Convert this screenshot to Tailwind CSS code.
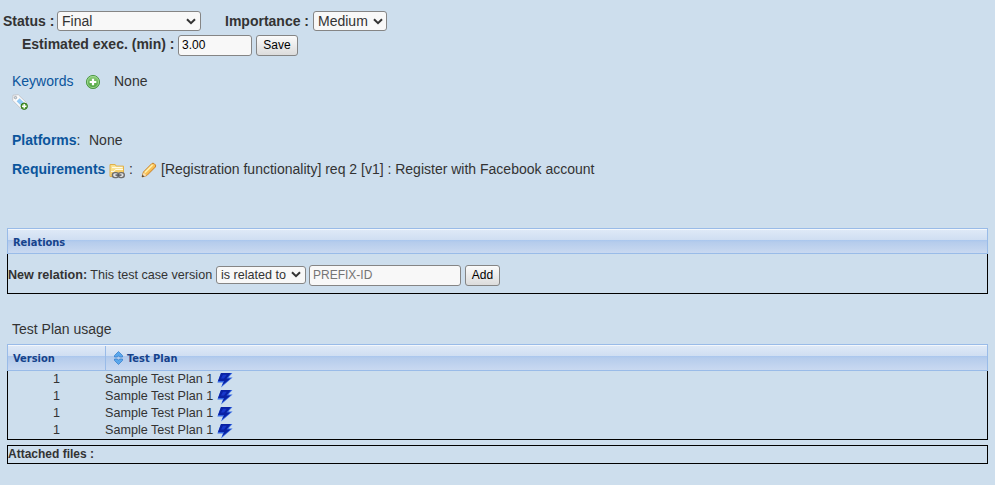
<!DOCTYPE html>
<html lang="en">
<head>
<meta charset="utf-8">
<title>Test Case</title>
<script src="https://cdn.jsdelivr.net/npm/@tailwindcss/browser@4"></script>
</head>
<body class="h-[485px] w-[995px] overflow-hidden bg-[#cddeed] font-['Liberation_Sans',Arial,sans-serif] text-[14px] leading-[18px] whitespace-nowrap text-[#333]">
<svg class="absolute size-0">
  <defs>
    <linearGradient id="green" x1="0" y1="0" x2="0" y2="1"><stop offset="0" stop-color="#8fce7c"/><stop offset="1" stop-color="#48a03c"/></linearGradient>
    <linearGradient id="pencil" x1="0" y1="0" x2="1" y2="1"><stop offset="0" stop-color="#fff0a0"/><stop offset=".5" stop-color="#fbc45a"/><stop offset="1" stop-color="#e08a20"/></linearGradient>
    <symbol id="chevron" viewBox="0 0 10 7"><path d="M1 1.2 5 5.2 9 1.2" fill="none" stroke="#333" stroke-width="2"/></symbol>
    <symbol id="bolt" viewBox="0 0 16 16"><path d="M4 1H15.4L11.4 5.6H15.6L4 15.4 6 10.4H.4Z" fill="#3468e4"/><path d="M4 1H14L9.5 6.4H13.6L5 13.4 7.2 9H1Z" fill="#0a22a4"/><path d="M6 2.8H9.8L7 6.6H4Z" fill="#1838cc"/></symbol>
  </defs>
</svg>

<main class="flex flex-col">
  <div class="flex h-[22px] items-center pl-[3px] mt-[10px]">
    <label class="w-[54px] font-bold">Status :</label>
    <div class="grid h-5 w-36 items-center">
      <select class="col-start-1 row-start-1 h-5 w-36 appearance-none rounded-[3px] border border-[#858585] bg-[#f8f8f8] pl-1 text-[14px] leading-[18px]"><option>Final</option></select>
      <svg class="pointer-events-none col-start-1 row-start-1 mr-[5px] h-[7px] w-[10px] justify-self-end"><use href="#chevron"/></svg>
    </div>
    <label class="ml-6 w-[88px] font-bold">Importance :</label>
    <div class="grid h-5 w-[74px] items-center">
      <select class="col-start-1 row-start-1 h-5 w-[74px] appearance-none rounded-[3px] border border-[#858585] bg-[#f8f8f8] pl-1 text-[14px] leading-[18px]"><option>Medium</option></select>
      <svg class="pointer-events-none col-start-1 row-start-1 mr-[4px] h-[7px] w-[10px] justify-self-end"><use href="#chevron"/></svg>
    </div>
  </div>
  <div class="mt-[2px] flex h-[22px] items-center pl-[22px]">
    <label class="w-[156px] pb-[2px] font-bold">Estimated exec. (min) :</label>
    <input value="3.00" class="h-[21px] w-[74px] rounded-[3px] border border-[#858585] bg-[#f8f8f8] px-[3px] text-[12px] text-black">
    <button class="ml-1 h-[21px] w-[42px] rounded-[3px] border border-[#858585] bg-linear-to-b from-[#fbfbfb] to-[#dcdcdc] text-[12px] leading-[18px] text-black">Save</button>
  </div>

  <div class="mt-[15px] flex h-5 items-center pl-3">
    <a class="w-[73px] text-[#0b559c]">Keywords</a>
    <svg class="mt-[2px] size-4" viewBox="0 0 16 16"><circle cx="8" cy="8" r="6.6" fill="url(#green)" stroke="#4f9a48"/><circle cx="8" cy="8" r="5.6" fill="none" stroke="#a6dc98" stroke-width=".8"/><path d="M8 4.7v6.6M4.7 8h6.6" stroke="#fff" stroke-width="2.2"/></svg>
    <span class="ml-[13px]">None</span>
  </div>
  <div class="mt-[3px] pl-3">
    <svg class="size-4" viewBox="0 0 16 16"><path d="M1 1.2 6.3.7 14.6 8.8 8.8 14.6.7 6.4Z" fill="#fbfbfc" stroke="#c3c5ca"/><path d="M4.6 7.2 7.6 4.2 12 8.4 8.8 11.4Z" fill="#92caf6"/><circle cx="3.5" cy="3.6" r="1.2" fill="#cddeed" stroke="#999" stroke-width=".8"/><circle cx="12.2" cy="12.2" r="3.2" fill="#5ba538" stroke="#35751f"/><path d="M12.2 10v4.4M10 12.2h4.4" stroke="#fff" stroke-width="1.4"/></svg>
  </div>
  <div class="mt-[21px] flex h-[18px] items-center pl-3">
    <span class="w-[77px]"><b class="text-[#0b559c]">Platforms</b>:</span><span>None</span>
  </div>
  <div class="mt-[11px] flex h-[18px] items-center pl-3">
    <b class="w-[97px] text-[#0b559c]">Requirements</b>
    <svg class="mt-[3px] size-4" viewBox="0 0 16 16"><path d="M1 13.5V1.5h5.2l1 1.6h7.3v10.4Z" fill="#f9e08c" stroke="#dfb04c"/><path d="M3 4.5h10.5" stroke="#fffbe4" stroke-width="1.2"/><path d="M2 13V9h3l1.5-2H14v6Z" fill="#f6d06a"/><path d="M2 8.5h3l1.5-2H14" fill="none" stroke="#fffbe4"/><g fill="#e2e3e4" stroke="#6d6d6d" stroke-width="1.4"><rect x="3.4" y="9.6" width="6.2" height="5" rx="2.5"/><rect x="9.3" y="9.6" width="6" height="5" rx="2.5"/></g><path d="M6.5 12.1h6" stroke="#555" stroke-width="1.4"/></svg>
    <span class="ml-1 w-3">:</span>
    <svg class="mt-[2px] size-4" viewBox="0 0 16 16"><path d="M1 15 2.4 10 10.8 1.6Q12 .6 13.3 1.8L14.3 2.8Q15.3 4 14.2 5.2L5.9 13.5Z" fill="url(#pencil)" stroke="#c47b21" stroke-width=".9"/><path d="M4 10.5 11.5 3" stroke="#fff3b1" stroke-width="1.5"/><path d="m1.4 14.6 1.2-4 2.9 2.9Z" fill="#f5dfba"/><path d="m1 15 .6-2.2 1.6 1.6Z" fill="#333"/></svg>
    <span class="ml-1">[Registration functionality] req 2 [v1] : Register with Facebook account</span>
  </div>

  <section class="mt-[50px] ml-[7px] w-[981px] text-[12.6px]">
    <h2 class="h-[26px] border border-[#99bbe8] text-[11px] font-bold text-[#15428b]">
      <span class="flex h-[24px] items-center border-t border-[#f3f7fc] bg-[linear-gradient(to_bottom,#dee9f7_0,#cfdef2_10px,#a8c6ee_10px,#b5ccec_12px,#cbdaf1_24px)] pl-[5px] pt-[2px] font-['DejaVu_Sans_Condensed','DejaVu_Sans',sans-serif] font-stretch-condensed">Relations</span>
    </h2>
    <div class="flex h-[40px] items-center border-x border-b border-black">
      <span class="mt-[2px] w-[208px]"><b>New relation:</b> This test case version</span>
      <div class="mt-[2px] grid h-[18px] w-[90px] items-center">
        <select class="col-start-1 row-start-1 h-[18px] w-[90px] appearance-none rounded-[3px] border border-[#858585] bg-[#f8f8f8] pl-1 text-[12.6px] leading-4"><option>is related to</option></select>
        <svg class="pointer-events-none col-start-1 row-start-1 mr-[5px] h-[7px] w-[10px] justify-self-end"><use href="#chevron"/></svg>
      </div>
      <input placeholder="PREFIX-ID" class="mt-[4px] ml-[3px] h-[21px] w-[152px] rounded-[3px] border border-[#858585] bg-[#f8f8f8] px-[3px] pb-[2px] text-[12px] placeholder:text-[#757575]">
      <button class="mt-[4px] ml-1 h-[21px] w-[35px] rounded-[3px] border border-[#858585] bg-linear-to-b from-[#fbfbfb] to-[#dcdcdc] pb-[2px] text-[12px] leading-[18px] text-black">Add</button>
    </div>
  </section>

  <h3 class="mt-[26px] pl-3">Test Plan usage</h3>
  <section class="mt-[6px] ml-[7px] w-[981px] text-[12.6px]">
    <div class="h-[27px] border border-[#99bbe8] text-[11px] font-bold text-[#15428b]">
      <div class="flex h-[25px] items-center border-t border-[#f3f7fc] bg-[linear-gradient(to_bottom,#dee9f7_0,#cfdef2_10px,#a8c6ee_10px,#b5ccec_12px,#cbdaf1_25px)] font-['DejaVu_Sans_Condensed','DejaVu_Sans',sans-serif] font-stretch-condensed">
        <span class="flex h-full w-[98px] items-center border-r border-[#99bbe8] pl-[5px]"><span class="pt-[2px]">Version</span></span>
        <svg class="ml-2 h-[14px] w-[9px]" viewBox="0 0 9 14"><path d="M4.5.5 8.5 4.5V6H6L4.5 5 3 6H.5V4.5ZM.5 8H3l1.5 1L6 8h2.5v1.5l-4 4-4-4Z" fill="#5ba8ec" stroke="#2f78c8" stroke-width=".7"/></svg>
        <span class="ml-[4px] pt-[2px]">Test Plan</span>
      </div>
    </div>
    <div class="h-[69px] border-x border-b border-black leading-[17px]">
      <div class="flex h-[17px] items-start"><span class="w-[97px] text-center">1</span><span class="w-[112px]">Sample Test Plan 1</span><svg class="mt-px size-4"><use href="#bolt"/></svg></div>
      <div class="flex h-[17px] items-start"><span class="w-[97px] text-center">1</span><span class="w-[112px]">Sample Test Plan 1</span><svg class="mt-px size-4"><use href="#bolt"/></svg></div>
      <div class="flex h-[17px] items-start"><span class="w-[97px] text-center">1</span><span class="w-[112px]">Sample Test Plan 1</span><svg class="mt-px size-4"><use href="#bolt"/></svg></div>
      <div class="flex h-[17px] items-start"><span class="w-[97px] text-center">1</span><span class="w-[112px]">Sample Test Plan 1</span><svg class="mt-px size-4"><use href="#bolt"/></svg></div>
    </div>
  </section>
  <section class="mt-[5px] ml-[7px] flex h-[19px] w-[981px] items-center border border-black pb-[2px] text-[12px] font-bold">Attached files :</section>
</main>
</body>
</html>
